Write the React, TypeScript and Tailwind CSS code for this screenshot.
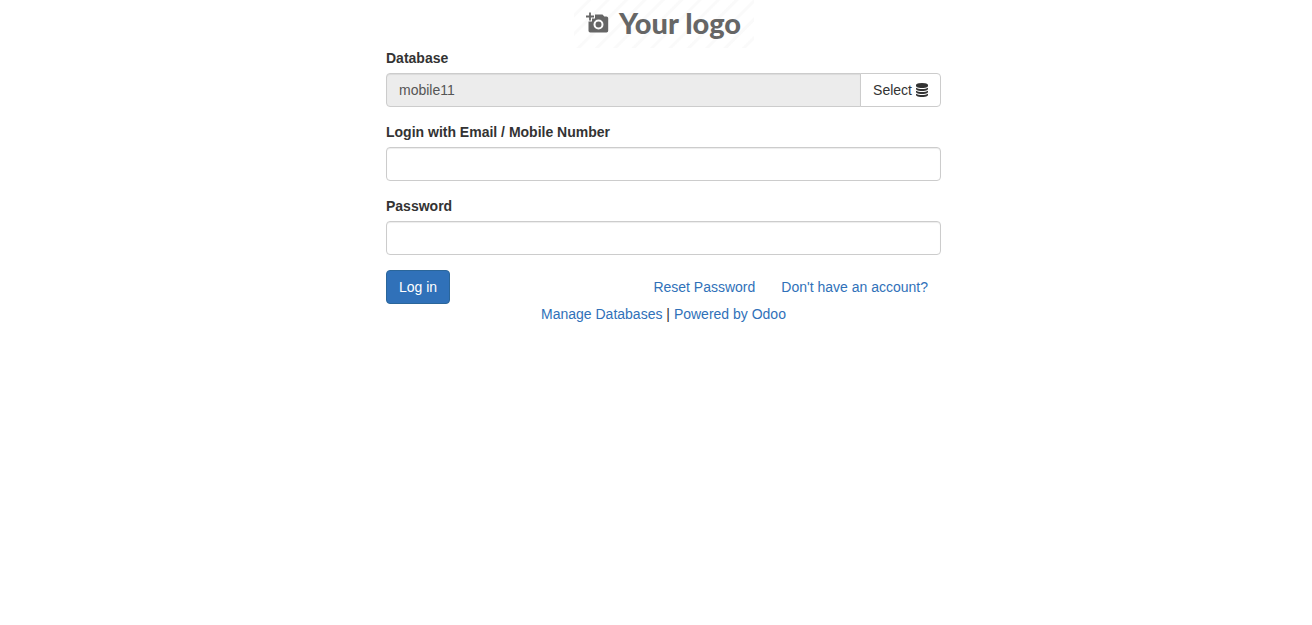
import type { ComponentProps, ReactNode } from 'react';

function Logo() {
  return (
    <div
      role="img"
      aria-label="Your logo"
      className="mx-auto flex h-12 w-[180px] items-start justify-center gap-2.5 bg-[repeating-linear-gradient(135deg,#ffffff_0px,#ffffff_9px,#fafafa_10px,#fafafa_12px,#ffffff_13px)] pt-[7px] text-[#666666]"
    >
      <svg viewBox="0 0 23 22" className="mt-[5px] h-[22px] w-[23px]" aria-hidden="true">
        <path d="M4 0.5v8M0 4.5h8" stroke="currentColor" strokeWidth="1.8" fill="none" />
        <path
          fillRule="evenodd"
          fill="currentColor"
          d="M9 2.500h7.500l1.800 2h2.200a1.700 1.700 0 0 1 1.700 1.700v12.600a1.700 1.700 0 0 1-1.700 1.700H4.200A1.700 1.700 0 0 1 2.500 18.800V9.500H6V6.500H9zM12.500 7.500a5 5 0 1 0 0 10a5 5 0 0 0 0-10zm0 2a3 3 0 1 1 0 6a3 3 0 0 1 0-6z"
        />
      </svg>
      <span className="font-['Lato',sans-serif] text-[29px] leading-8 font-black whitespace-nowrap">
        Your logo
      </span>
    </div>
  );
}

function DatabaseIcon() {
  return (
    <svg viewBox="0 0 1536 1792" className="h-3.5 w-3" fill="currentColor" aria-hidden="true">
      <path d="M768 768q237 0 443-43t325-127v170q0 69-103 128t-280 93.5-385 34.5-385-34.5-280-93.5-103-128v-170q119 84 325 127t443 43zM768 1536q237 0 443-43t325-127v170q0 69-103 128t-280 93.5-385 34.5-385-34.5-280-93.5-103-128v-170q119 84 325 127t443 43zM768 1152q237 0 443-43t325-127v170q0 69-103 128t-280 93.5-385 34.5-385-34.5-280-93.5-103-128v-170q119 84 325 127t443 43zM768 0q208 0 385 34.5t280 93.5 103 128v128q0 69-103 128t-280 93.5-385 34.5-385-34.5-280-93.5-103-128v-128q0-69 103-128t280-93.5 385-34.5z" />
    </svg>
  );
}

function Field({ id, label, children }: { id: string; label: string; children: ReactNode }) {
  return (
    <div className="mb-[15px]">
      <label htmlFor={id} className="mb-[5px] block font-bold">
        {label}
      </label>
      {children}
    </div>
  );
}

function TextInput(props: ComponentProps<'input'>) {
  return (
    <input
      {...props}
      className="block h-[34px] w-full rounded border border-[#cccccc] bg-white px-3 text-[#555555] shadow-[inset_0_1px_1px_rgba(0,0,0,0.075)] outline-none read-only:rounded-r-none read-only:bg-[#ececec] focus:border-[#66afe9]"
    />
  );
}

export default function App() {
  return (
    <main className="pl-[15px] font-['Liberation_Sans',Arial,sans-serif] text-sm leading-5 text-[#333333]">
      <div className="mx-auto max-w-[555px]">
        <Logo />
        <form onSubmit={(event) => event.preventDefault()}>
          <Field id="db" label="Database">
            <div className="flex">
              <TextInput id="db" name="db" defaultValue="mobile11" readOnly />
              <button
                type="button"
                className="-ml-px flex shrink-0 items-center gap-1 rounded-r border border-[#cccccc] bg-white px-3 hover:bg-[#e6e6e6]"
              >
                Select
                <DatabaseIcon />
              </button>
            </div>
          </Field>
          <Field id="login" label="Login with Email / Mobile Number">
            <TextInput id="login" name="login" type="text" />
          </Field>
          <Field id="password" label="Password">
            <TextInput id="password" name="password" type="password" />
          </Field>
          <div className="flex items-center justify-between">
            <button
              type="submit"
              className="h-[34px] rounded border border-[#2b669a] bg-[#3071b9] px-3 text-white hover:bg-[#286090]"
            >
              Log in
            </button>
            <div className="flex gap-[26px] pr-[13px] text-[#3071b9]">
              <a href="#reset" className="hover:underline">Reset Password</a>
              <a href="#signup" className="hover:underline">Don't have an account?</a>
            </div>
          </div>
        </form>
        <footer className="text-center">
          <a href="#databases" className="text-[#3071b9] hover:underline">Manage Databases</a>
          {' | '}
          <a href="#odoo" className="text-[#3071b9] hover:underline">Powered by Odoo</a>
        </footer>
      </div>
    </main>
  );
}
